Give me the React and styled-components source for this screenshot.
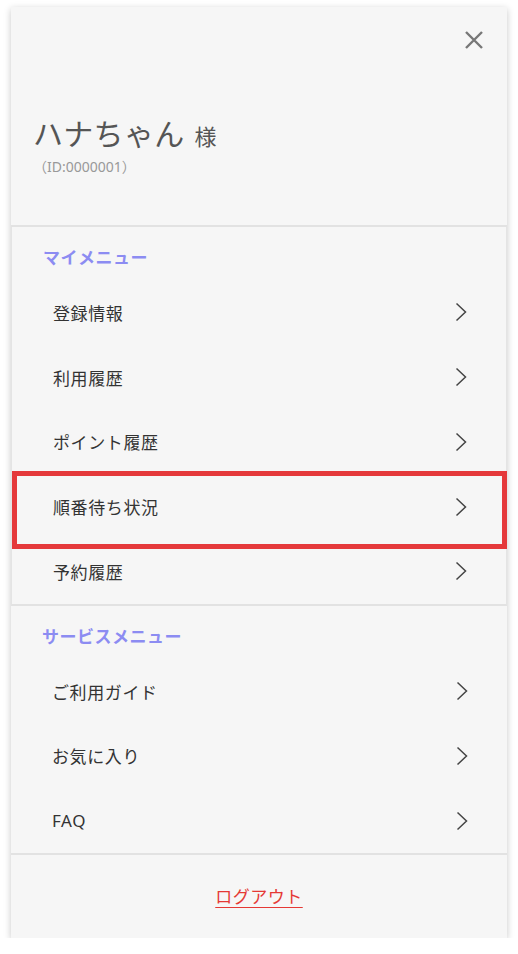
import React from 'react'
import styled, { createGlobalStyle } from 'styled-components'

const GlobalStyle = createGlobalStyle`
  html, body {
    margin: 0;
    padding: 0;
    background: #ffffff;
  }
  body {
    font-family: "Noto Sans", "Noto Sans CJK JP", sans-serif;
  }
`

const myMenu = ['登録情報', '利用履歴', 'ポイント履歴', '順番待ち状況', '予約履歴']
const serviceMenu = ['ご利用ガイド', 'お気に入り', 'FAQ']

function CloseIcon () {
  return (
    <svg width='18' height='18' viewBox='0 0 18 18'>
      <path d='M1 1 L17 17 M17 1 L1 17' stroke='#777' strokeWidth='2.4' fill='none' />
    </svg>
  )
}

function Chevron () {
  return (
    <svg width='12' height='20' viewBox='0 0 12 20'>
      <path d='M1.5 1.5 L10.5 10 L1.5 18.5' stroke='#444' strokeWidth='1.5' fill='none' />
    </svg>
  )
}

function App () {
  return (
    <>
      <GlobalStyle />
      <Card>
        <Header>
          <CloseRow>
            <CloseButton><CloseIcon /></CloseButton>
          </CloseRow>
          <NameLine>
            <Name>ハナちゃん</Name>
            <Honorific>様</Honorific>
          </NameLine>
          <UserId>（ID:0000001）</UserId>
        </Header>

        <Section bordered>
          <SectionTitle>マイメニュー</SectionTitle>
          {myMenu.map(label => (
            <Row key={label}>
              <RowLabel>{label}</RowLabel>
              <Chevron />
              {label === '順番待ち状況' && <Highlight />}
            </Row>
          ))}
        </Section>

        <Section>
          <SectionTitle>サービスメニュー</SectionTitle>
          {serviceMenu.map(label => (
            <Row key={label}>
              <RowLabel>{label}</RowLabel>
              <Chevron />
            </Row>
          ))}
        </Section>

        <Footer>
          <Logout href='#'>ログアウト</Logout>
        </Footer>
      </Card>
    </>
  )
}

export default App

const Card = styled.div`
  width: 496px;
  margin: 7px 0 0 11px;
  background: #f6f6f6;
  box-shadow: 0 2px 7px rgba(0, 0, 0, 0.22);
`

const Header = styled.div`
  display: flex;
  flex-direction: column;
  padding: 24px 0 48px 0;
  border-bottom: 2px solid #e2e2e2;
`

const CloseRow = styled.div`
  display: flex;
  justify-content: flex-end;
  padding-right: 24px;
  height: 18px;
`

const CloseButton = styled.div`
  display: flex;
  width: 18px;
  height: 18px;
`

const NameLine = styled.div`
  display: flex;
  align-items: baseline;
  gap: 10px;
  margin-top: 65px;
  padding-left: 22px;
  color: #555;
  line-height: 40px;
`

const Name = styled.span`
  font-size: 30px;
  letter-spacing: 0.3px;
`

const Honorific = styled.span`
  font-size: 22px;
`

const UserId = styled.div`
  margin-top: 1px;
  padding-left: 22px;
  font-size: 14px;
  line-height: 20px;
  color: #999;
`

const Section = styled.div`
  display: flex;
  flex-direction: column;
  padding-top: 21px;
  border-bottom: 2px solid #e2e2e2;
  border-left: ${p => (p.bordered ? '1px solid #e4e4e4' : 'none')};
  border-right: ${p => (p.bordered ? '1px solid #e4e4e4' : 'none')};
`

const SectionTitle = styled.div`
  padding-left: 31px;
  margin-bottom: 12px;
  font-size: 17px;
  line-height: 20px;
  font-weight: 700;
  color: #8c8cf2;
  letter-spacing: 0.5px;
`

const Row = styled.div`
  position: relative;
  display: flex;
  align-items: center;
  justify-content: space-between;
  height: 64.75px;
  padding: 0 39px 0 41px;
`

const RowLabel = styled.span`
  font-size: 17px;
  letter-spacing: 0.6px;
  color: #333;
`

const Highlight = styled.div`
  position: absolute;
  top: -3px;
  bottom: -10px;
  left: 0;
  right: -1px;
  border: 5px solid #e5393b;
  pointer-events: none;
`

const Footer = styled.div`
  display: flex;
  justify-content: center;
  padding: 32px 0 31px;
`

const Logout = styled.a`
  font-size: 17px;
  line-height: 20px;
  letter-spacing: 0.5px;
  color: #e53935;
  text-decoration: underline;
  text-underline-offset: 4px;
  text-decoration-thickness: 1px;
`
